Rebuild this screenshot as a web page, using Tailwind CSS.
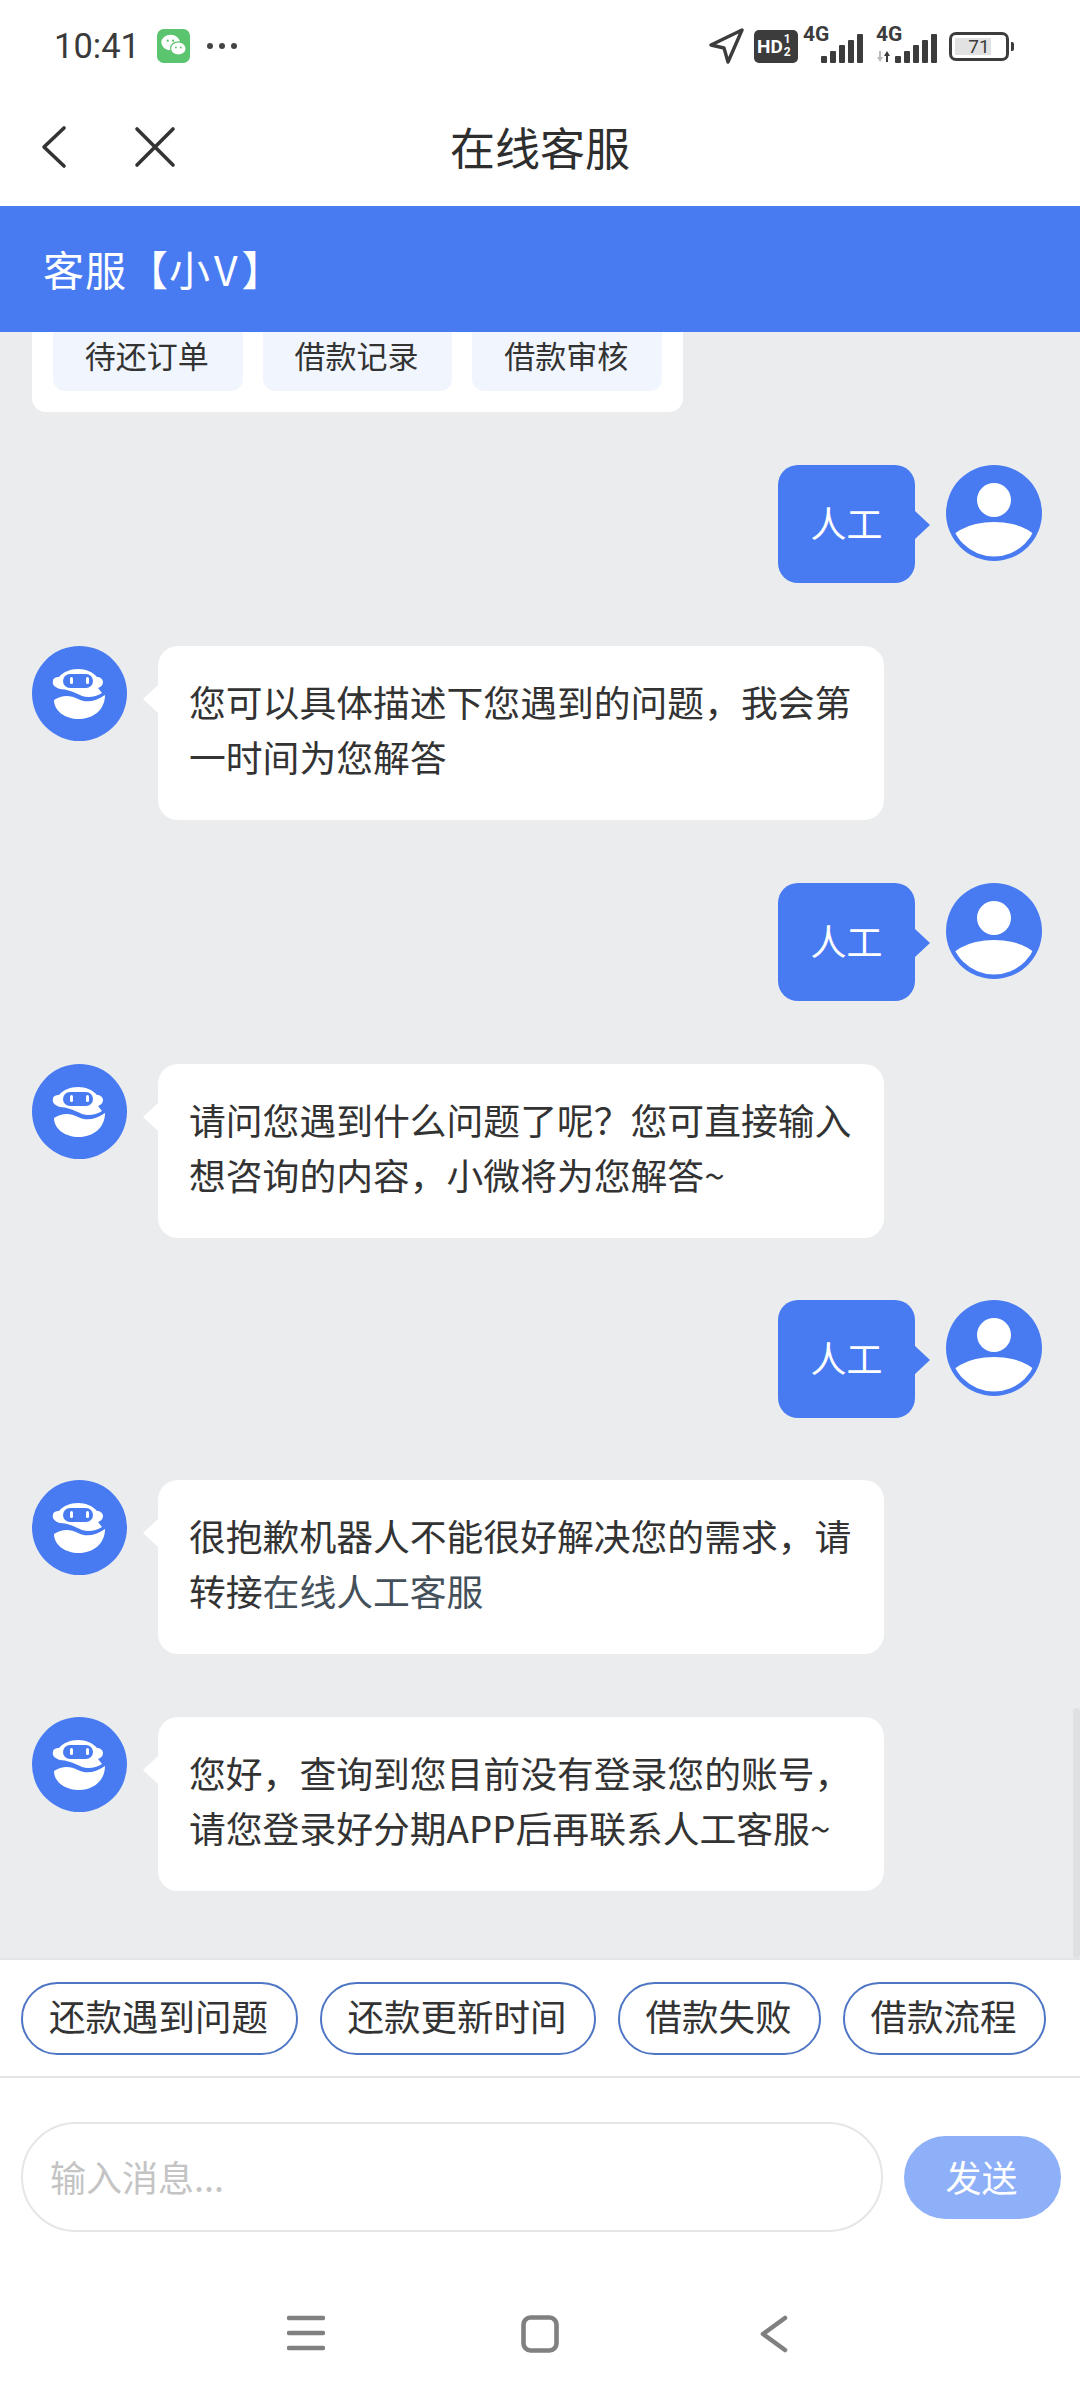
<!DOCTYPE html>
<html lang="zh-CN">
<head>
    <meta charset="UTF-8">
    <meta name="viewport" content="width=device-width, initial-scale=1.0">
    <title>在线客服</title>
    <script src="https://cdn.jsdelivr.net/npm/@tailwindcss/browser@4"></script>
</head>
<body class="bg-white font-['Noto_Sans_CJK_SC','Noto_Sans',sans-serif] text-[#333]">
<div class="relative flex h-[2400px] w-[1080px] flex-col overflow-hidden">
    <!-- Status bar -->
    <div class="flex h-[92px] shrink-0 items-center justify-between pl-[54px] pr-[66px]">
        <div class="flex items-center">
            <span class="font-['Roboto',sans-serif] text-[34.5px] leading-none text-[#3a3a3a]">10:41</span>
            <svg class="ml-[17px]" width="33" height="34" viewBox="0 0 34 35">
                <rect width="34" height="35" rx="7" fill="#5bc46f"/>
                <ellipse cx="14" cy="14" rx="9.5" ry="8" fill="#fff"/>
                <ellipse cx="22" cy="20" rx="8" ry="6.8" fill="#fff" stroke="#5bc46f" stroke-width="1.2"/>
                <circle cx="11" cy="12" r="1.2" fill="#5bc46f"/><circle cx="16.5" cy="12" r="1.2" fill="#5bc46f"/>
                <circle cx="19.5" cy="19" r="1" fill="#5bc46f"/><circle cx="24.5" cy="19" r="1" fill="#5bc46f"/>
            </svg>
            <div class="ml-[17px] flex gap-[6px]">
                <span class="h-[6px] w-[6px] rounded-full bg-[#444]"></span>
                <span class="h-[6px] w-[6px] rounded-full bg-[#444]"></span>
                <span class="h-[6px] w-[6px] rounded-full bg-[#444]"></span>
            </div>
        </div>
        <div class="flex items-center">
            <svg width="36" height="36" viewBox="0 0 36 36" fill="none"><path d="M34 2 3 17l13 3 4 14z" stroke="#3c3c3c" stroke-width="3.4" stroke-linejoin="round"/></svg>
            <div class="ml-[10px] flex h-[33px] w-[44px] items-center rounded-[5px] bg-[#3c3c3c] pl-[3px] font-['Roboto',sans-serif] text-[19px] font-bold leading-none text-white">HD<span class="ml-[1px] flex flex-col text-[12px] leading-[13px]"><span>1</span><span>2</span></span></div>
            <div class="relative ml-[5px] h-[34px] w-[60px]">
                <span class="absolute left-0 top-[-5px] font-['Roboto',sans-serif] text-[21px] font-bold leading-none text-[#3c3c3c]">4G</span>
                <div class="absolute bottom-0 right-0 flex items-end gap-[3px]">
                    <span class="h-[7px] w-[6px] rounded-[1px] bg-[#3c3c3c]"></span><span class="h-[12px] w-[6px] rounded-[1px] bg-[#3c3c3c]"></span><span class="h-[18px] w-[6px] rounded-[1px] bg-[#3c3c3c]"></span><span class="h-[23px] w-[6px] rounded-[1px] bg-[#3c3c3c]"></span><span class="h-[29px] w-[6px] rounded-[1px] bg-[#3c3c3c]"></span>
                </div>
            </div>
            <div class="relative ml-[13px] h-[34px] w-[61px]">
                <span class="absolute left-0 top-[-5px] font-['Roboto',sans-serif] text-[21px] font-bold leading-none text-[#3c3c3c]">4G</span>
                <svg class="absolute bottom-[1px] left-0" width="16" height="11" viewBox="0 0 16 11"><path d="M3 0h2v6h2l-3 5-3-5h2z" fill="#bbb"/><path d="M10 11h2V5h2l-3-5-3 5h2z" fill="#3c3c3c"/></svg>
                <div class="absolute bottom-0 right-0 flex items-end gap-[3px]">
                    <span class="h-[7px] w-[6px] rounded-[1px] bg-[#3c3c3c]"></span><span class="h-[12px] w-[6px] rounded-[1px] bg-[#3c3c3c]"></span><span class="h-[18px] w-[6px] rounded-[1px] bg-[#3c3c3c]"></span><span class="h-[23px] w-[6px] rounded-[1px] bg-[#3c3c3c]"></span><span class="h-[29px] w-[6px] rounded-[1px] bg-[#3c3c3c]"></span>
                </div>
            </div>
            <div class="ml-[12px] flex items-center">
                <div class="relative flex h-[29px] w-[60px] items-center justify-center overflow-hidden rounded-[7px] border-[3px] border-[#3c3c3c] p-[2px]">
                    <div class="absolute bottom-[3px] left-[3px] top-[3px] w-[36px] bg-[#e2e2e2]"></div>
                    <span class="relative font-['Roboto',sans-serif] text-[19px] leading-none text-[#3c3c3c]">71</span>
                </div>
                <span class="ml-[2px] h-[9px] w-[3px] rounded-r-[2px] bg-[#3c3c3c]"></span>
            </div>
        </div>
    </div>

    <!-- Nav bar -->
    <div class="relative flex h-[114px] shrink-0 items-start justify-center pt-[23px]">
        <svg class="absolute left-[38px] top-[32px]" width="34" height="46" viewBox="0 0 34 46" fill="none"><path d="M26 4 6 23l20 19" stroke="#333" stroke-width="3.6" stroke-linecap="round" stroke-linejoin="round"/></svg>
        <svg class="absolute left-[133px] top-[33px]" width="44" height="44" viewBox="0 0 44 44" fill="none"><path d="M4 4l36 36M40 4 4 40" stroke="#333" stroke-width="3.6" stroke-linecap="round"/></svg>
        <span class="text-[45px] leading-[64px] text-[#2e2e2e]">在线客服</span>
    </div>

    <!-- Blue header -->
    <div class="flex h-[126px] shrink-0 items-center bg-[#487bf2] pb-[2px] pl-[43px] text-[41px] leading-none tracking-[1px] text-white">客服【小<span class="px-[3px]">V</span>】</div>

    <!-- Chat area -->
    <div class="relative flex min-h-0 flex-1 flex-col overflow-hidden bg-[#ebecee] px-[32px]">
        <div class="mb-[53px] w-[651px] shrink-0 rounded-b-[14px] bg-white px-[21px] pb-[21px]">
            <div class="-mt-[14px] flex gap-[20px]">
                <div class="flex h-[73px] w-[190px] items-center justify-center rounded-[12px] bg-[#f1f5fd] pr-[2px] text-[31px] leading-none">待还订单</div>
                <div class="flex h-[73px] w-[190px] items-center justify-center rounded-[12px] bg-[#f1f5fd] pr-[2px] text-[31px] leading-none">借款记录</div>
                <div class="flex h-[73px] w-[190px] items-center justify-center rounded-[12px] bg-[#f1f5fd] pr-[2px] text-[31px] leading-none">借款审核</div>
            </div>
        </div>

        <!-- user -->
        <div class="mb-[63px] flex shrink-0 justify-end pr-[6px]">
            <div class="relative flex h-[118px] w-[137px] items-center justify-center rounded-[20px] bg-[#487bf2] pb-[4px] text-[36px] leading-none text-white">人工
                <span class="absolute right-[-15px] top-[46px] h-0 w-0 border-y-[14px] border-l-[15px] border-y-transparent border-l-[#487bf2]"></span>
            </div>
            <svg class="ml-[31px]" width="96" height="96" viewBox="0 0 96 96"><defs><clipPath id="u1"><circle cx="48" cy="48" r="43.5"/></clipPath></defs><circle cx="48" cy="48" r="48" fill="#487bf2"/><circle cx="48" cy="35" r="17" fill="#fff"/><ellipse cx="48" cy="84" rx="48" ry="27" fill="#fff" clip-path="url(#u1)"/></svg>
        </div>

        <!-- bot -->
        <div class="mb-[63px] flex shrink-0">
            <svg width="95" height="95" viewBox="0 0 95 95"><circle cx="47.5" cy="47.5" r="47.5" fill="#487bf2"/><path d="M28 43C22 41 20 38 21 35 21 32 24 31 27 31 31 26 38 23 46 23 54 23 61 26 65 31 68 31 71 33 71 36 71 39 69 41 66 42L70 47C64 51 56 52 50 50 42 46 34 43 28 43Z" fill="#fff"/><rect x="31" y="28" width="30" height="14" rx="7" fill="#487bf2"/><rect x="38" y="31" width="3" height="7" rx="1.5" fill="#fff"/><rect x="54" y="31" width="3" height="7" rx="1.5" fill="#fff"/><path d="M22 54C30 49 38 49 46 53 54 57 63 56 73 49 73 64 61 73 47 73 33 73 22 65 22 54Z" fill="#fff"/></svg>
            <div class="relative ml-[31px] h-[174px] w-[726px] rounded-[20px] bg-white px-[31px] pt-[28px] text-[36.8px] leading-[55px] text-[#333]">
                <span class="absolute left-[-15px] top-[39px] h-0 w-0 border-y-[14px] border-r-[15px] border-y-transparent border-r-white"></span>
                您可以具体描述下您遇到的问题，我会第<br>一时间为您解答
            </div>
        </div>

        <!-- user -->
        <div class="mb-[63px] flex shrink-0 justify-end pr-[6px]">
            <div class="relative flex h-[118px] w-[137px] items-center justify-center rounded-[20px] bg-[#487bf2] pb-[4px] text-[36px] leading-none text-white">人工
                <span class="absolute right-[-15px] top-[46px] h-0 w-0 border-y-[14px] border-l-[15px] border-y-transparent border-l-[#487bf2]"></span>
            </div>
            <svg class="ml-[31px]" width="96" height="96" viewBox="0 0 96 96"><defs><clipPath id="u2"><circle cx="48" cy="48" r="43.5"/></clipPath></defs><circle cx="48" cy="48" r="48" fill="#487bf2"/><circle cx="48" cy="35" r="17" fill="#fff"/><ellipse cx="48" cy="84" rx="48" ry="27" fill="#fff" clip-path="url(#u2)"/></svg>
        </div>

        <!-- bot -->
        <div class="mb-[62px] flex shrink-0">
            <svg width="95" height="95" viewBox="0 0 95 95"><circle cx="47.5" cy="47.5" r="47.5" fill="#487bf2"/><path d="M28 43C22 41 20 38 21 35 21 32 24 31 27 31 31 26 38 23 46 23 54 23 61 26 65 31 68 31 71 33 71 36 71 39 69 41 66 42L70 47C64 51 56 52 50 50 42 46 34 43 28 43Z" fill="#fff"/><rect x="31" y="28" width="30" height="14" rx="7" fill="#487bf2"/><rect x="38" y="31" width="3" height="7" rx="1.5" fill="#fff"/><rect x="54" y="31" width="3" height="7" rx="1.5" fill="#fff"/><path d="M22 54C30 49 38 49 46 53 54 57 63 56 73 49 73 64 61 73 47 73 33 73 22 65 22 54Z" fill="#fff"/></svg>
            <div class="relative ml-[31px] h-[174px] w-[726px] rounded-[20px] bg-white px-[31px] pt-[28px] text-[36.8px] leading-[55px] text-[#333]">
                <span class="absolute left-[-15px] top-[39px] h-0 w-0 border-y-[14px] border-r-[15px] border-y-transparent border-r-white"></span>
                请问您遇到什么问题了呢？您可直接输入<br>想咨询的内容，小微将为您解答~
            </div>
        </div>

        <!-- user -->
        <div class="mb-[62px] flex shrink-0 justify-end pr-[6px]">
            <div class="relative flex h-[118px] w-[137px] items-center justify-center rounded-[20px] bg-[#487bf2] pb-[4px] text-[36px] leading-none text-white">人工
                <span class="absolute right-[-15px] top-[46px] h-0 w-0 border-y-[14px] border-l-[15px] border-y-transparent border-l-[#487bf2]"></span>
            </div>
            <svg class="ml-[31px]" width="96" height="96" viewBox="0 0 96 96"><defs><clipPath id="u3"><circle cx="48" cy="48" r="43.5"/></clipPath></defs><circle cx="48" cy="48" r="48" fill="#487bf2"/><circle cx="48" cy="35" r="17" fill="#fff"/><ellipse cx="48" cy="84" rx="48" ry="27" fill="#fff" clip-path="url(#u3)"/></svg>
        </div>

        <!-- bot -->
        <div class="mb-[63px] flex shrink-0">
            <svg width="95" height="95" viewBox="0 0 95 95"><circle cx="47.5" cy="47.5" r="47.5" fill="#487bf2"/><path d="M28 43C22 41 20 38 21 35 21 32 24 31 27 31 31 26 38 23 46 23 54 23 61 26 65 31 68 31 71 33 71 36 71 39 69 41 66 42L70 47C64 51 56 52 50 50 42 46 34 43 28 43Z" fill="#fff"/><rect x="31" y="28" width="30" height="14" rx="7" fill="#487bf2"/><rect x="38" y="31" width="3" height="7" rx="1.5" fill="#fff"/><rect x="54" y="31" width="3" height="7" rx="1.5" fill="#fff"/><path d="M22 54C30 49 38 49 46 53 54 57 63 56 73 49 73 64 61 73 47 73 33 73 22 65 22 54Z" fill="#fff"/></svg>
            <div class="relative ml-[31px] h-[174px] w-[726px] rounded-[20px] bg-white px-[31px] pt-[28px] text-[36.8px] leading-[55px] text-[#333]">
                <span class="absolute left-[-15px] top-[39px] h-0 w-0 border-y-[14px] border-r-[15px] border-y-transparent border-r-white"></span>
                很抱歉机器人不能很好解决您的需求，请<br>转接<span class="text-[#44505a]">在线人工客服</span>
            </div>
        </div>

        <!-- bot -->
        <div class="flex shrink-0">
            <svg width="95" height="95" viewBox="0 0 95 95"><circle cx="47.5" cy="47.5" r="47.5" fill="#487bf2"/><path d="M28 43C22 41 20 38 21 35 21 32 24 31 27 31 31 26 38 23 46 23 54 23 61 26 65 31 68 31 71 33 71 36 71 39 69 41 66 42L70 47C64 51 56 52 50 50 42 46 34 43 28 43Z" fill="#fff"/><rect x="31" y="28" width="30" height="14" rx="7" fill="#487bf2"/><rect x="38" y="31" width="3" height="7" rx="1.5" fill="#fff"/><rect x="54" y="31" width="3" height="7" rx="1.5" fill="#fff"/><path d="M22 54C30 49 38 49 46 53 54 57 63 56 73 49 73 64 61 73 47 73 33 73 22 65 22 54Z" fill="#fff"/></svg>
            <div class="relative ml-[31px] h-[174px] w-[726px] rounded-[20px] bg-white px-[31px] pt-[28px] text-[36.8px] leading-[55px] text-[#333]">
                <span class="absolute left-[-15px] top-[39px] h-0 w-0 border-y-[14px] border-r-[15px] border-y-transparent border-r-white"></span>
                您好，查询到您目前没有登录您的账号，<br>请您登录好分期APP后再联系人工客服~
            </div>
        </div>

        <div class="absolute bottom-0 right-0 h-[250px] w-[7px] rounded-[4px] bg-[#dfe0e2]"></div>
    </div>

    <!-- Quick replies -->
    <div class="flex h-[120px] shrink-0 items-center gap-[22px] border-y-2 border-[#e4e4e4] pl-[21px] text-[36.5px] leading-none">
        <div class="flex h-[73px] w-[277px] items-center justify-center rounded-full border-2 border-[#4f76c4] pb-[4px] pr-[2px]">还款遇到问题</div>
        <div class="flex h-[73px] w-[276px] items-center justify-center rounded-full border-2 border-[#4f76c4] pb-[4px] pr-[2px]">还款更新时间</div>
        <div class="flex h-[73px] w-[203px] items-center justify-center rounded-full border-2 border-[#4f76c4] pb-[4px] pr-[2px]">借款失败</div>
        <div class="flex h-[73px] w-[203px] items-center justify-center rounded-full border-2 border-[#4f76c4] pb-[4px] pr-[2px]">借款流程</div>
    </div>

    <!-- Input row -->
    <div class="flex h-[198px] shrink-0 items-center pl-[21px]">
        <div class="flex h-[110px] w-[862px] items-center rounded-full border-2 border-[#e6e6e6] pb-[2px] pl-[27px] text-[36px] leading-none text-[#c4c4c4]">输入消息...</div>
        <div class="ml-[21px] flex h-[83px] w-[157px] items-center justify-center rounded-full bg-[#8eb0f8] pb-[2px] pr-[2px] text-[36px] leading-none text-white">发送</div>
    </div>

    <!-- Android nav -->
    <div class="flex h-[124px] shrink-0 items-start justify-center pt-[39px]">
        <div class="flex w-[234px] justify-center">
            <svg width="38" height="36" viewBox="0 0 38 36"><path d="M2 3h34M2 18h34M2 33h34" stroke="#808080" stroke-width="4.6" stroke-linecap="round"/></svg>
        </div>
        <div class="flex w-[234px] justify-center">
            <svg width="38" height="38" viewBox="0 0 38 38" fill="none"><rect x="2.5" y="2.5" width="33" height="33" rx="7" stroke="#808080" stroke-width="4.6"/></svg>
        </div>
        <div class="flex w-[234px] justify-center">
            <svg width="30" height="38" viewBox="0 0 30 38" fill="none"><path d="M26 3 4 19l22 16" stroke="#808080" stroke-width="4.6" stroke-linecap="round" stroke-linejoin="round"/></svg>
        </div>
    </div>
</div>
</body>
</html>
